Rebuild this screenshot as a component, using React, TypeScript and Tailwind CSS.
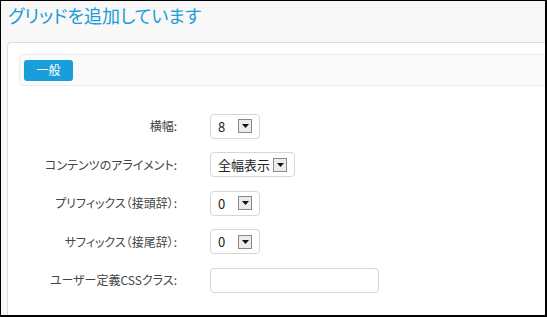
const jp = { fontFamily: '"Noto Sans CJK JP", "Noto Sans", sans-serif', fontFeatureSettings: '"palt"' };

function Arrow() {
    return (
        <span className="flex h-[14px] w-[14px] items-center justify-center border border-[#8a8a8a] bg-[#ececec]">
            <svg width="7" height="4" viewBox="0 0 7 4">
                <path d="M0 0h7L3.5 4z" fill="#111" />
            </svg>
        </span>
    );
}

function Select({ value, width }: { value: string; width: string }) {
    return (
        <div className={`flex h-[25px] items-center justify-between rounded-[4px] border border-[#d6d6d6] bg-white pl-[7px] pr-[7px] ${width}`}>
            <span className="text-[13px] text-[#222]">{value}</span>
            <Arrow />
        </div>
    );
}

const rows = [
    { label: '横幅:', control: <Select value="8" width="w-[50px]" /> },
    { label: 'コンテンツのアライメント:', control: <Select value="全幅表示" width="w-[85px]" /> },
    { label: 'プリフィックス（接頭辞）:', control: <Select value="0" width="w-[50px]" /> },
    { label: 'サフィックス（接尾辞）:', control: <Select value="0" width="w-[50px]" /> },
    {
        label: 'ユーザー定義CSSクラス:',
        control: <div className="h-[25px] w-[169px] rounded-[4px] border border-[#d6d6d6] bg-white" />,
    },
];

export default function App() {
    return (
        <div
            className="h-[317px] w-[547px] overflow-hidden border-t border-l border-r-2 border-b-2 border-black bg-[#f8f8f8]"
            style={jp}
        >
            <div className="flex h-[41px] items-start pl-[7px] pt-[3px]">
                <h1 className="text-[18px] font-normal leading-[23px] text-[#1b9bd7]">グリッドを追加しています</h1>
            </div>
            <div className="ml-[6px] h-[300px] w-[600px] rounded-tl-[4px] border border-[#dcdcdc] bg-white px-[11px] pt-[11px]">
                <div className="flex h-[32px] items-center rounded-[4px] border border-[#ececec] bg-[#fafafa] pl-[4px]">
                    <button className="flex h-[21px] w-[49px] items-center justify-center rounded-[3px] bg-[#1a9ed9] text-[12px] text-white">
                        一般
                    </button>
                </div>
                <div className="mt-[21px] -ml-[11px]">
                    {rows.map((r) => (
                        <div key={r.label} className="flex h-[38.5px] items-center">
                            <span className="w-[169px] text-right text-[12px] text-[#444]">{r.label}</span>
                            <div className="ml-[33px]">{r.control}</div>
                        </div>
                    ))}
                </div>
            </div>
        </div>
    );
}
